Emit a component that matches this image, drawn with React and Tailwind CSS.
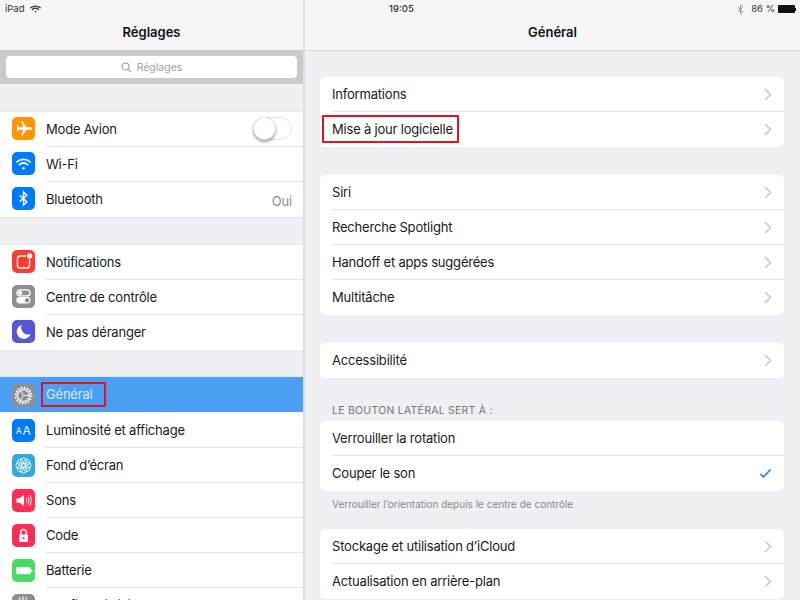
import React from "react";

const F = { fontFamily: "Inter, 'Liberation Sans', sans-serif" };

function Chevron() {
  return (
    <svg width="8" height="13" viewBox="0 0 8 13" fill="none" className="shrink-0">
      <path d="M1 1l5.500 5.500L1 12" stroke="#c7c7cc" strokeWidth="1.500" />
    </svg>
  );
}

const icons = {
  plane: (
    <path d="M18.500 10.500c0-.8-.8-1.200-1.800-1.200H13.200L9.800 3.800H8.400l1.700 5.500H6.300L5 7.500H4l.8 3L4 13.500h1l1.300-1.800h3.800l-1.700 5.500h1.400l3.400-5.500h3.500c1 0 1.800-.4 1.800-1.200z" fill="#fff" />
  ),
  wifi: (
    <g fill="none" stroke="#fff" strokeLinecap="round">
      <path d="M4.500 9c3.300-3 8.700-3 12 0" strokeWidth="1.600" />
      <path d="M6.800 11.500c2.200-1.900 5.200-1.900 7.400 0" strokeWidth="1.600" />
      <circle cx="10.500" cy="14.800" r="1.100" fill="#fff" stroke="none" />
    </g>
  ),
  bt: <path d="M7 7.500l6.500 6-3 3V4.500l3 3-6.500 6" fill="none" stroke="#fff" strokeWidth="1.300" />,
  notif: (
    <g>
      <rect x="5" y="5.500" width="11" height="11" rx="2.500" fill="none" stroke="#fff" strokeWidth="1.300" />
      <circle cx="16" cy="5.500" r="3.400" fill="#ff3b30" />
      <circle cx="16" cy="5.500" r="2.500" fill="#fff" />
    </g>
  ),
  control: (
    <g>
      <rect x="4.500" y="4.500" width="12" height="5.500" rx="2.750" fill="none" stroke="#fff" strokeWidth="1.200" />
      <circle cx="7.500" cy="7.250" r="1.900" fill="#fff" />
      <rect x="4" y="11" width="13" height="6" rx="3" fill="#fff" />
      <circle cx="13.800" cy="14" r="2" fill="#8e8e93" />
    </g>
  ),
  moon: <path d="M9 4.500a6.500 6.500 0 1 0 8 8.300 6.200 6.200 0 0 1-8-8.300z" fill="#fff" />,
  gear: (
    <g fill="none" stroke="#fff">
      <circle cx="10.500" cy="10.500" r="7" strokeWidth="2.200" strokeDasharray="1.500 1.250" />
      <circle cx="10.500" cy="10.500" r="5.300" strokeWidth="1" />
      <path d="M10.500 10.500L7.800 6M10.500 10.500h5.200M10.500 10.500L7.800 15" strokeWidth=".8" />
    </g>
  ),
  bright: (
    <g fill="#fff">
      <text x="3.500" y="14" fontSize="8" fontFamily="Inter, sans-serif">A</text>
      <text x="9.500" y="14.500" fontSize="11" fontFamily="Inter, sans-serif">A</text>
    </g>
  ),
  wall: (
    <g fill="none" stroke="#fff" strokeWidth=".8">
      {[0, 45, 90, 135, 180, 225, 270, 315].map((a) => (
        <circle key={a} cx="10.500" cy="6.300" r="2.700" transform={`rotate(${a} 10.500 10.500)`} />
      ))}
      <circle cx="10.500" cy="10.500" r="2" />
    </g>
  ),
  sound: (
    <g>
      <path d="M4 8.500h3l4-3.500v11l-4-3.500H4z" fill="#fff" />
      <path d="M12.800 8.500c.8 1.200.8 2.800 0 4M14.500 7c1.300 2.100 1.300 4.900 0 7M16.200 5.500c1.800 3 1.800 7 0 10" fill="none" stroke="#fff" strokeWidth=".9" />
    </g>
  ),
  lock: (
    <g>
      <path d="M8 10V7.500a2.500 2.500 0 0 1 5 0V10" fill="none" stroke="#fff" strokeWidth="1.300" />
      <rect x="6.500" y="9.500" width="8" height="7" rx=".8" fill="#fff" />
      <circle cx="10.500" cy="13" r="1" fill="#ff2d55" />
    </g>
  ),
  batt: (
    <g fill="#fff">
      <rect x="4" y="7.500" width="13" height="6.500" rx="1.200" />
      <rect x="17.500" y="9.500" width="1" height="2.500" />
    </g>
  ),
  privacy: <path d="M7 3v6M10 2v7M13 3v6M7 8h6v3c0 1-1 2-3 2s-3-1-3-2z" fill="#fff" stroke="#fff" />,
};

function Icon({ name, bg, low }) {
  return (
    <div className={`w-[23px] h-[23px] rounded-[5px] shrink-0 ${low ? "mt-[2px]" : "mb-[2px]"} ${bg}`}>
      <svg width="23" height="23" viewBox="0 0 21 21">{icons[name]}</svg>
    </div>
  );
}

function SideRow({ icon, bg, label, last, right, active, boxed, low }) {
  return (
    <div className={`relative h-[35px] flex items-center pl-[12px] pr-[11px] shrink-0 ${active ? "bg-[#4a9ff5]" : ""}`}>
      <Icon name={icon} bg={bg} low={low} />
      <span className={`ml-[11px] text-[13px] tracking-[-0.2px] ${low && !active ? "mt-[2px]" : ""} ${active ? "text-[#d8e9fb]" : "text-[#1a1a1a]"}`}>{label}</span>
      {right && <span className="ml-auto">{right}</span>}
      {boxed && <div className="absolute left-[41px] top-[5px] w-[65px] h-[25px] border-2 border-[#e3141f]" />}
      {!last && <div className={`absolute left-[46px] right-0 h-px bg-[#e4e4e7] ${low ? "bottom-[-1px] z-10" : "bottom-0"}`} />}
    </div>
  );
}

function SideGroup({ children, className = "" }) {
  return <div className={`bg-white flex flex-col border-y border-[#e6e6ea] shrink-0 ${className}`}>{children}</div>;
}

function Row({ label, last, check, boxed }) {
  return (
    <div className="relative h-[35px] flex items-center pl-[12px] pr-[12px] shrink-0">
      <span className="text-[13px] tracking-[-0.2px] text-[#1a1a1a]">{label}</span>
      <span className="ml-auto flex items-center">
        {check ? (
          <svg width="13" height="11" viewBox="0 0 13 11" fill="none">
            <path d="M1.500 6l3 3L11.500 1.500" stroke="#1f7cf0" strokeWidth="1.700" />
          </svg>
        ) : check === false ? null : (
          <Chevron />
        )}
      </span>
      {boxed && <div className="absolute left-[2px] top-[3px] w-[137px] h-[28px] border-2 border-[#e3141f] rounded-[1px]" />}
      {!last && <div className="absolute left-[12px] right-0 bottom-0 h-px bg-[#e4e4e7]" />}
    </div>
  );
}

function Card({ children, className = "" }) {
  return <div className={`bg-white rounded-[5px] flex flex-col shrink-0 ${className}`}>{children}</div>;
}

export default function App() {
  return (
    <div style={F} className="relative w-[800px] h-[600px] overflow-hidden bg-[#efeff4] flex">
      <div className="w-[303px] h-full flex flex-col overflow-hidden shrink-0">
        <div className="h-[50px] bg-[#f6f6f8] shrink-0 flex flex-col">
          <div className="h-[17px] pl-[5px] pt-px flex items-center text-[9.500px] text-[#333] gap-[5px]">
            <span>iPad</span>
            <svg width="11" height="8" viewBox="0 0 11 8" fill="none" stroke="#222" strokeLinecap="round">
              <path d="M.8 2.800c2.700-2.400 6.700-2.400 9.400 0" strokeWidth="1.200" />
              <path d="M2.500 4.500c1.700-1.500 4.300-1.500 6 0" strokeWidth="1.200" />
              <circle cx="5.500" cy="6.500" r=".8" fill="#222" stroke="none" />
            </svg>
          </div>
          <div className="flex-1 flex items-center justify-center pb-[1px] text-[13px] font-semibold text-[#111]">Réglages</div>
        </div>
        <div className="h-[34px] bg-[#c9c9ce] px-[6px] flex items-center shrink-0">
          <div className="w-full h-[22px] pt-px bg-white rounded-[4px] flex items-center justify-center gap-[5px] text-[10.500px] text-[#a0a0a6]">
            <svg width="11" height="11" viewBox="0 0 11 11" fill="none" stroke="#9a9aa0" strokeWidth="1.100">
              <circle cx="4.500" cy="4.500" r="3.500" />
              <path d="M7.200 7.200l3 3" />
            </svg>
            Réglages
          </div>
        </div>
        <div className="flex-1 flex flex-col pt-[27px] min-h-0">
          <SideGroup>
            <SideRow icon="plane" bg="bg-[#ff9500]" label="Mode Avion" right={
              <div className="relative w-[39px] h-[23px] mb-[2px] rounded-full bg-white border border-[#e3e3e6]">
                <div className="absolute left-[-1px] top-[-1px] w-[23px] h-[23px] rounded-full bg-white shadow-[0_2px_3px_rgba(0,0,0,0.35)] border border-[#e0e0e0]" />
              </div>
            } />
            <SideRow icon="wifi" bg="bg-[#007aff]" label="Wi-Fi" />
            <SideRow icon="bt" bg="bg-[#007aff]" label="Bluetooth" last right={<span className="text-[13px] tracking-[-0.2px] text-[#8e8e93]">Oui</span>} />
          </SideGroup>
          <SideGroup className="mt-[26px]">
            <SideRow icon="notif" bg="bg-[#ff3b30]" label="Notifications" />
            <SideRow icon="control" bg="bg-[#8e8e93]" label="Centre de contrôle" />
            <SideRow icon="moon" bg="bg-[#5856d6]" label="Ne pas déranger" last />
          </SideGroup>
          <SideGroup className="mt-[25px]">
            <SideRow icon="gear" bg="bg-[#8e8e93]" label="Général" active last boxed low />
            <SideRow icon="bright" bg="bg-[#007aff]" label="Luminosité et affichage" low />
            <SideRow icon="wall" bg="bg-[#34aadc]" label="Fond d’écran" low />
            <SideRow icon="sound" bg="bg-[#ff2d55]" label="Sons" low />
            <SideRow icon="lock" bg="bg-[#ff2d55]" label="Code" low />
            <SideRow icon="batt" bg="bg-[#4cd964]" label="Batterie" low />
            <SideRow icon="privacy" bg="bg-[#8e8e93]" label="Confidentialité" last low />
          </SideGroup>
        </div>
      </div>
      <div className="w-[2px] bg-[#dedee2] shrink-0" />
      <div className="flex-1 h-full flex flex-col overflow-hidden">
        <div className="h-[51px] bg-[#f6f6f8] border-b border-[#d8d8dc] shrink-0 flex flex-col">
          <div className="h-[17px] relative pt-px flex items-center justify-end pr-[4px] text-[9.500px] text-[#333]">
            <span className="absolute left-[84px] font-medium">19:05</span>
            <svg width="7" height="11" viewBox="0 0 7 11" fill="none" stroke="#8a8a8e" strokeWidth=".9" className="mr-[7px]">
              <path d="M.8 3l5 4.800L3.500 10V1L5.800 3.200l-5 4.800" />
            </svg>
            <span>86 %</span>
            <span className="ml-[3px] flex items-center">
              <span className="w-[17px] h-[8px] bg-[#111] rounded-[1px]" />
              <span className="w-[1px] h-[3px] bg-[#111]" />
            </span>
          </div>
          <div className="flex-1 flex items-center justify-center pb-[2px] text-[13px] font-semibold text-[#111]">Général</div>
        </div>
        <div className="flex-1 flex flex-col pl-[15px] pr-[16px] pt-[26px] min-h-0">
          <Card>
            <Row label="Informations" />
            <Row label="Mise à jour logicielle" last boxed />
          </Card>
          <Card className="mt-[28px]">
            <Row label="Siri" />
            <Row label="Recherche Spotlight" />
            <Row label="Handoff et apps suggérées" />
            <Row label="Multitâche" last />
          </Card>
          <Card className="mt-[28px]">
            <Row label="Accessibilité" last />
          </Card>
          <div className="mt-[26px] pl-[12px] h-[17px] text-[10.500px] leading-[13px] text-[#76767c] tracking-[0.25px] shrink-0">LE BOUTON LATÉRAL SERT À :</div>
          <Card>
            <Row label="Verrouiller la rotation" check={false} />
            <Row label="Couper le son" last check />
          </Card>
          <div className="pl-[12px] h-[38px] pt-[7px] text-[10px] leading-[13px] text-[#8a8a90] shrink-0">Verrouiller l’orientation depuis le centre de contrôle</div>
          <Card>
            <Row label="Stockage et utilisation d’iCloud" />
            <Row label="Actualisation en arrière-plan" last />
          </Card>
        </div>
      </div>
    </div>
  );
}
